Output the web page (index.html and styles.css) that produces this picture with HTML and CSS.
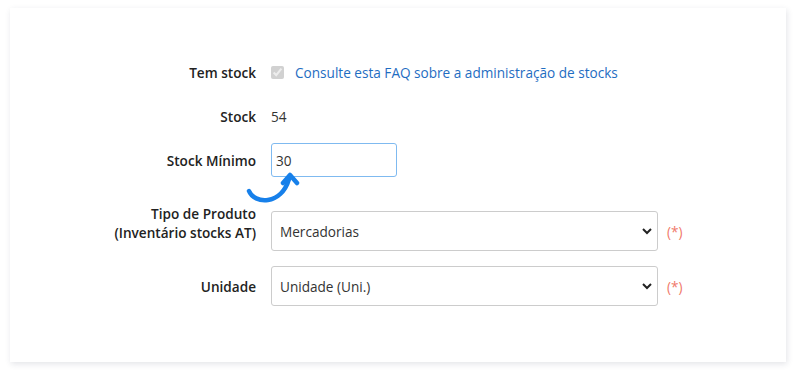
FILE: index.html
```html
<!DOCTYPE html>
<html lang="pt">
<head>
    <meta charset="UTF-8">
    <meta name="viewport" content="width=device-width, initial-scale=1.0">
    <title>Stock</title>
    <link rel="stylesheet" href="styles.css">
</head>
<body>
    <div class="card">
        <div class="row">
            <div class="label">Tem stock</div>
            <div class="field">
                <input type="checkbox" class="check" checked disabled>
                <a href="#" class="faq">Consulte esta FAQ sobre a administração de stocks</a>
            </div>
        </div>

        <div class="row">
            <div class="label">Stock</div>
            <div class="field">54</div>
        </div>

        <div class="row row-min">
            <div class="label">Stock Mínimo</div>
            <div class="field">
                <input type="text" class="input-min" value="30">
                <!-- hint arrow pointing at the field -->
                <svg class="hint-arrow" width="56" height="36" viewBox="0 0 56 36">
                    <path d="M5 20 C10 33, 37 35, 45 8" fill="none" stroke="#1780ea" stroke-width="4.5" stroke-linecap="round"/>
                    <path d="M39 12 L46 4 L53 12" fill="none" stroke="#1780ea" stroke-width="4.5" stroke-linecap="round" stroke-linejoin="round"/>
                </svg>
            </div>
        </div>

        <div class="row row-tipo">
            <div class="label label-top">Tipo de Produto<br>(Inventário stocks AT)</div>
            <div class="field">
                <select class="select">
                    <option>Mercadorias</option>
                </select>
                <span class="required">(*)</span>
            </div>
        </div>

        <div class="row">
            <div class="label">Unidade</div>
            <div class="field">
                <select class="select">
                    <option>Unidade (Uni.)</option>
                </select>
                <span class="required">(*)</span>
            </div>
        </div>
    </div>
</body>
</html>
```

FILE: styles.css
```css
body {
    margin: 0;
    padding: 8px 14px 15px 10px;
    background: #fff;
    font-family: "Open Sans", Arial, sans-serif;
    font-size: 13.6px;
    color: #333;
}
.card {
    background: #fff;
    padding: 44px 0 52px;
    box-shadow: 1px 2px 6px rgba(40, 50, 80, 0.13);
}
.row {
    display: flex;
    align-items: center;
    height: 40px;
    margin-bottom: 4px;
}
.row-min {
    margin-bottom: 31px;
}
.row-tipo {
    margin-bottom: 15px;
}
.label {
    width: 261px;
    padding-right: 15px;
    box-sizing: border-box;
    text-align: right;
    font-weight: 600;
    line-height: 19px;
    color: #222;
}
.label-top {
    margin-bottom: 16px;
}
.field {
    position: relative;
    display: flex;
    align-items: center;
}
.check {
    width: 13px;
    height: 13px;
    margin: 0 11px 0 0;
}
.faq {
    color: #1f6dc2;
    text-decoration: none;
}
.input-min {
    width: 126px;
    height: 34px;
    box-sizing: border-box;
    padding: 0 4px;
    border: 1px solid #7fbaf0;
    border-radius: 3px;
    font: inherit;
    color: #333;
    outline: none;
}
.hint-arrow {
    position: absolute;
    left: -27px;
    top: 28px;
}
.select {
    -webkit-appearance: none;
    appearance: none;
    width: 387px;
    height: 40px;
    box-sizing: border-box;
    padding: 0 30px 0 8px;
    border: 1px solid #ccc;
    border-radius: 3px;
    background: #fff url("data:image/svg+xml,%3Csvg xmlns='http://www.w3.org/2000/svg' width='12' height='8' viewBox='0 0 12 8'%3E%3Cpath d='M2 2 L6 6 L10 2' fill='none' stroke='%23222' stroke-width='2'/%3E%3C/svg%3E") no-repeat right 4px center;
    font: inherit;
    color: #333;
}
.required {
    margin-left: 9px;
    color: #f0796a;
}
```
